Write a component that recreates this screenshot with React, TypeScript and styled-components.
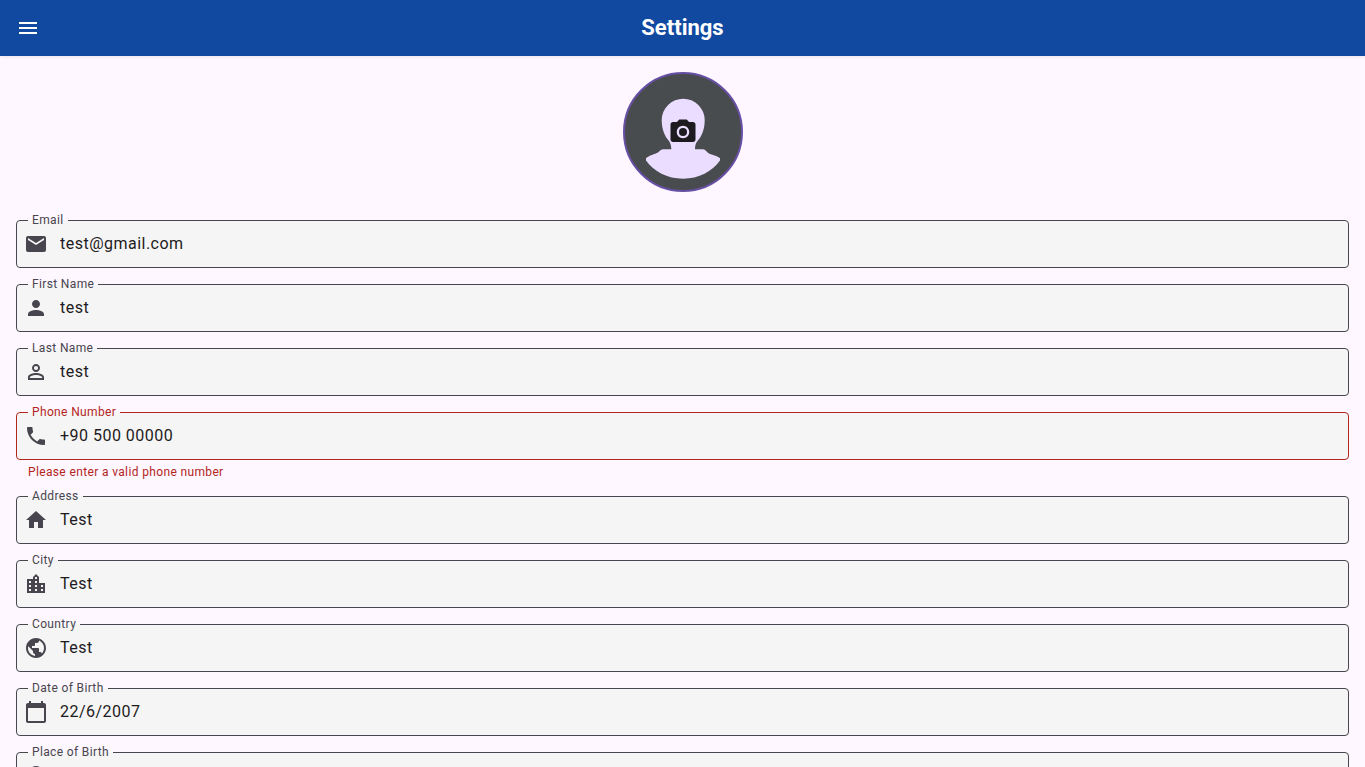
import React, { useState } from 'react';
import styled, { createGlobalStyle } from 'styled-components';
import type { IconType } from 'react-icons';
import {
  MdCalendarToday,
  MdCameraAlt,
  MdEmail,
  MdHome,
  MdLocationCity,
  MdLocationOn,
  MdMenu,
  MdPerson,
  MdPersonOutline,
  MdPhone,
  MdPublic,
} from 'react-icons/md';

const color = {
  bar: '#1148a0',
  page: '#fef7ff',
  field: '#f5f5f5',
  text: '#1d1b20',
  muted: '#49454f',
  error: '#b3261e',
  primary: '#6750a4',
  primaryContainer: '#eaddff',
  portrait: '#494c4e',
};

const GlobalStyle = createGlobalStyle`
  *, *::before, *::after { box-sizing: border-box; }
  body {
    margin: 0;
    background: ${color.page};
    color: ${color.text};
    font-family: Roboto, 'Liberation Sans', sans-serif;
  }
`;

const Screen = styled.div`
  display: flex;
  flex-direction: column;
  height: 100vh;
`;

const AppBar = styled.header`
  display: grid;
  grid-template-columns: 48px 1fr 48px;
  align-items: center;
  flex: none;
  height: 56px;
  padding: 0 4px;
  background: ${color.bar};
  color: #fff;
  box-shadow: 0 1px 3px rgba(0, 0, 0, 0.08);
  z-index: 1;
`;

const MenuButton = styled.button`
  display: flex;
  align-items: center;
  justify-content: center;
  height: 48px;
  padding: 0;
  border: 0;
  background: none;
  color: inherit;
  cursor: pointer;
`;

const Title = styled.h1`
  margin: 0;
  font-size: 22px;
  font-weight: 700;
  line-height: 28px;
  text-align: center;
`;

const Content = styled.main`
  flex: 1;
  min-height: 0;
  overflow-y: auto;
  scrollbar-width: none;
  padding: 16px;
`;

const AvatarButton = styled.button`
  display: grid;
  place-items: center;
  width: 120px;
  height: 120px;
  margin: 0 auto 28px;
  padding: 0;
  border: 0;
  border-radius: 50%;
  background: none;
  color: ${color.text};
  cursor: pointer;

  > * {
    grid-area: 1 / 1;
  }
`;

const Form = styled.form`
  display: flex;
  flex-direction: column;
  gap: 16px;
`;

const FieldBox = styled.div<{ $invalid: boolean }>`
  position: relative;
  display: flex;
  align-items: center;
  height: 48px;
  padding-left: 7px;
  border: 1px solid ${(p) => (p.$invalid ? color.error : color.muted)};
  border-radius: 4px;
  background: ${color.field};
  color: ${color.muted};

  > svg {
    flex: none;
  }
`;

const FieldLabel = styled.label<{ $invalid: boolean }>`
  position: absolute;
  top: -9px;
  left: 11px;
  padding: 0 4px;
  background: linear-gradient(${color.field}, ${color.field}) 0 8px / 100% 1px no-repeat;
  color: ${(p) => (p.$invalid ? color.error : color.muted)};
  font-size: 12px;
  line-height: 16px;
  letter-spacing: 0.03em;
`;

const FieldInput = styled.input`
  flex: 1;
  min-width: 0;
  height: 100%;
  padding: 0 12px 2px;
  border: 0;
  outline: 0;
  background: none;
  color: ${color.text};
  font: inherit;
  font-size: 16px;
  line-height: 24px;
  letter-spacing: 0.03em;
`;

const ErrorText = styled.p`
  margin: 4px 12px 0;
  color: ${color.error};
  font-size: 12px;
  line-height: 16px;
  letter-spacing: 0.03em;
`;

interface FieldSpec {
  id: string;
  label: string;
  value: string;
  icon: IconType;
  type?: string;
  error?: string;
}

const fields: FieldSpec[] = [
  { id: 'email', label: 'Email', value: 'test@gmail.com', icon: MdEmail, type: 'email' },
  { id: 'first-name', label: 'First Name', value: 'test', icon: MdPerson },
  { id: 'last-name', label: 'Last Name', value: 'test', icon: MdPersonOutline },
  {
    id: 'phone',
    label: 'Phone Number',
    value: '+90 500 00000',
    icon: MdPhone,
    type: 'tel',
    error: 'Please enter a valid phone number',
  },
  { id: 'address', label: 'Address', value: 'Test', icon: MdHome },
  { id: 'city', label: 'City', value: 'Test', icon: MdLocationCity },
  { id: 'country', label: 'Country', value: 'Test', icon: MdPublic },
  { id: 'birth-date', label: 'Date of Birth', value: '22/6/2007', icon: MdCalendarToday },
  { id: 'birth-place', label: 'Place of Birth', value: '', icon: MdLocationOn },
];

function Field({ id, label, value, icon: Icon, type = 'text', error }: FieldSpec) {
  const [current, setCurrent] = useState(value);
  const invalid = Boolean(error);
  return (
    <div>
      <FieldBox $invalid={invalid}>
        <FieldLabel htmlFor={id} $invalid={invalid}>
          {label}
        </FieldLabel>
        <Icon size={24} aria-hidden />
        <FieldInput
          id={id}
          type={type}
          value={current}
          onChange={(e) => setCurrent(e.target.value)}
          aria-invalid={invalid}
          aria-describedby={error ? `${id}-error` : undefined}
        />
      </FieldBox>
      {error && <ErrorText id={`${id}-error`}>{error}</ErrorText>}
    </div>
  );
}

function Portrait() {
  return (
    <svg width="120" height="120" viewBox="0 0 120 120" aria-hidden>
      <circle cx="60" cy="60" r="59" fill={color.portrait} stroke={color.primary} strokeWidth="2" />
      <path
        fill={color.primaryContainer}
        d="M60.2 26.7A21.5 21.5 0 0 0 38.7 48C38.7 57 41.5 64 46 69C47.5 71 48.3 74 48.3 77.3H40C37.5 77.6 36.5 79.5 35 80.5C32 82 26 83.5 23 86.2V88.5C31 99.5 44 106.7 60 106.7C76 106.7 89 99.5 97 88.5V86.2C93.5 83.5 88 82.5 85.5 81.2C83.5 80 82.5 77.6 80 77.3H72C72 74 72.6 71 74.5 69C79 64 81.7 57 81.7 48A21.5 21.5 0 0 0 60.2 26.7Z"
      />
    </svg>
  );
}

export default function App() {
  return (
    <Screen>
      <GlobalStyle />
      <AppBar>
        <MenuButton type="button" aria-label="Open menu">
          <MdMenu size={24} />
        </MenuButton>
        <Title>Settings</Title>
      </AppBar>
      <Content>
        <AvatarButton type="button" aria-label="Change photo">
          <Portrait />
          <MdCameraAlt size={30} />
        </AvatarButton>
        <Form>
          {fields.map((field) => (
            <Field key={field.id} {...field} />
          ))}
        </Form>
      </Content>
    </Screen>
  );
}
